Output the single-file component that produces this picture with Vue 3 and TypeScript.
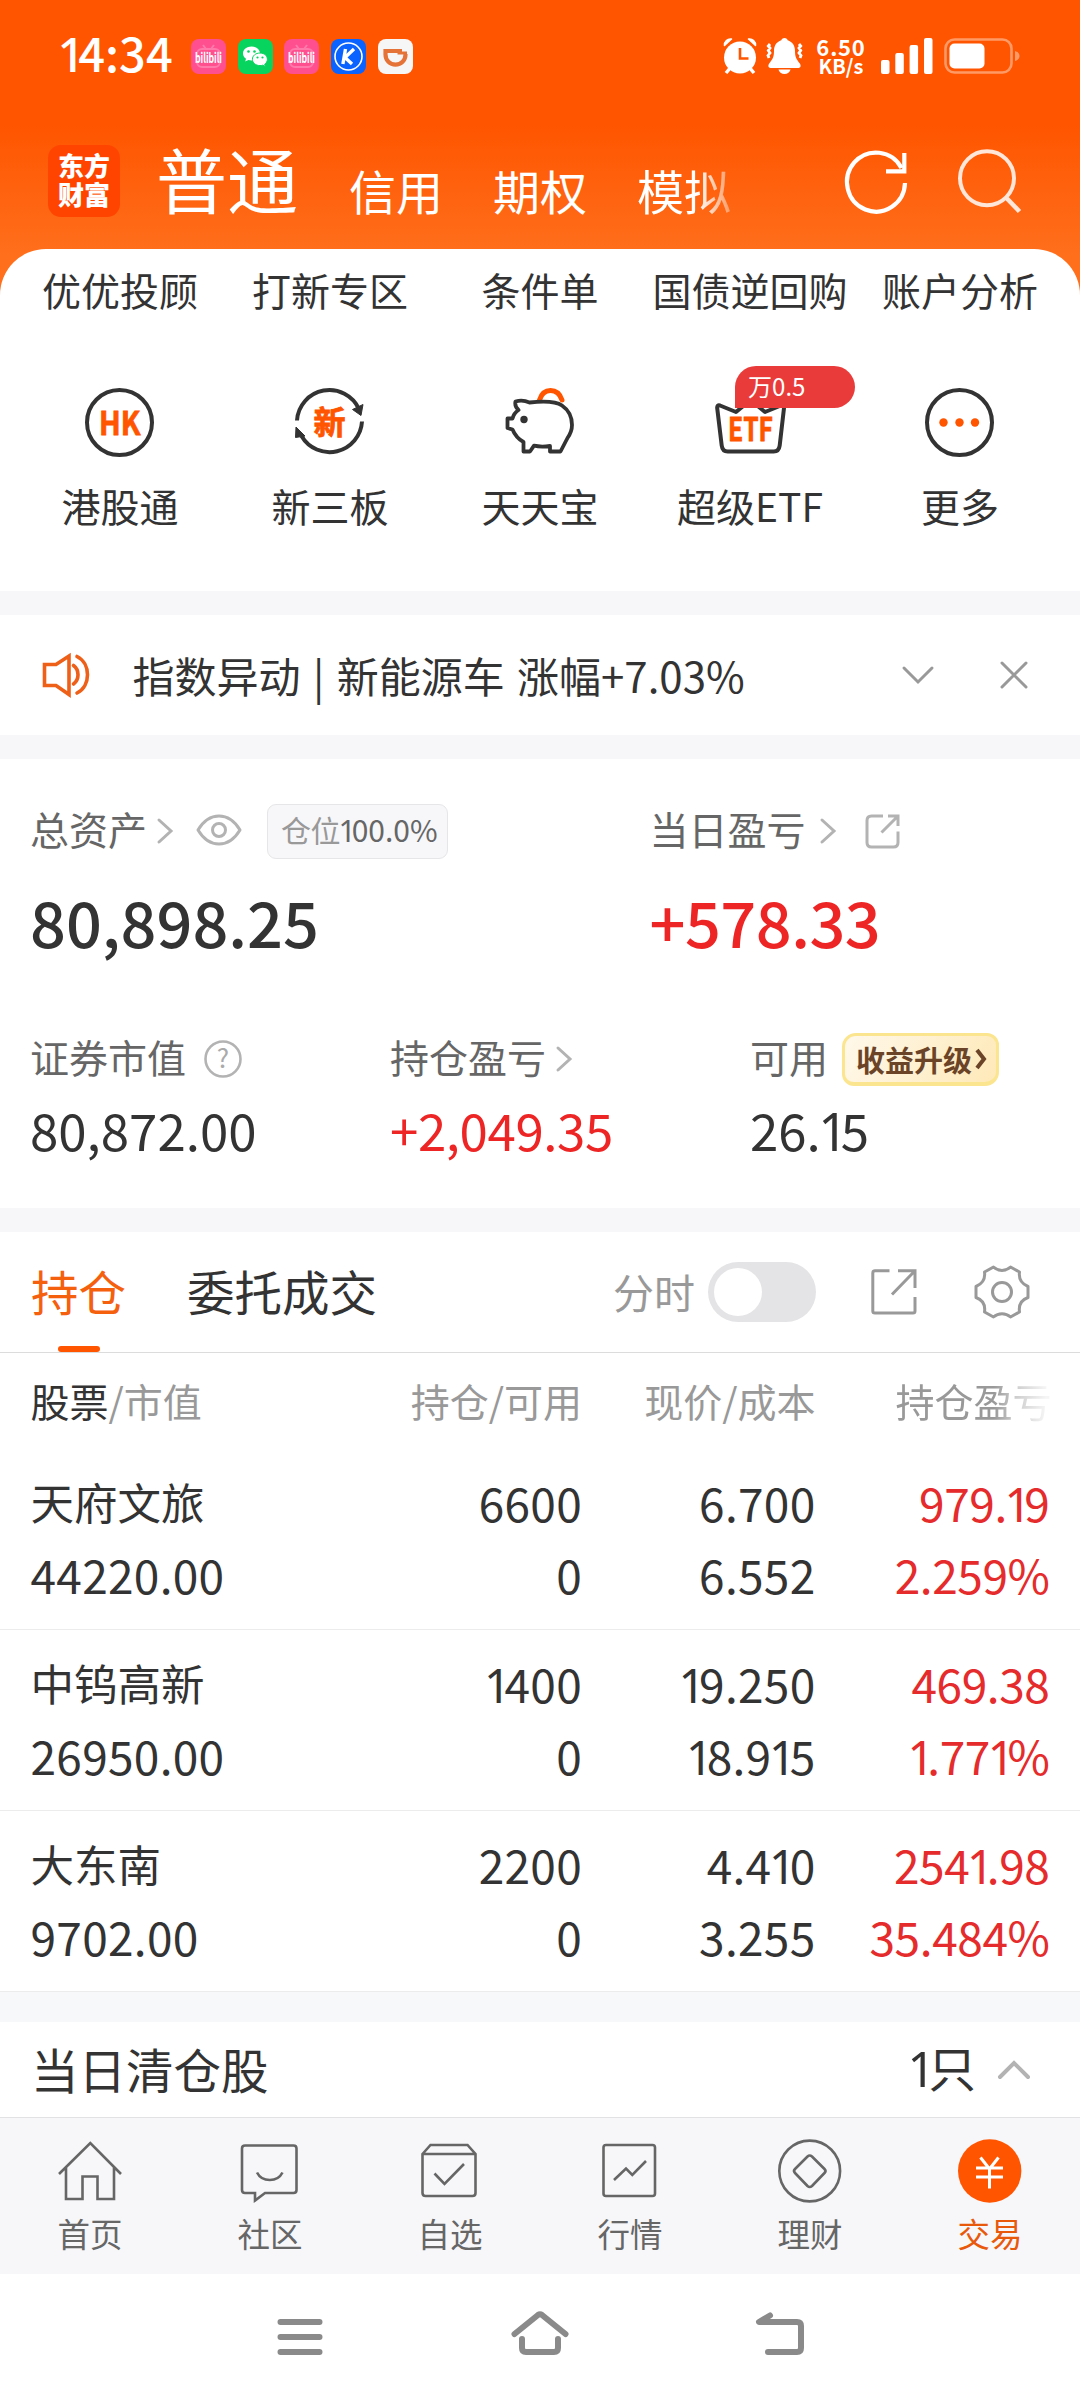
<script setup lang="ts">
import { h } from 'vue'

interface Holding {
  name: string
  value: string
  qty: string
  avail: string
  price: string
  cost: string
  profit: string
  rate: string
}

// Figures are set with a narrow, footless "1", so that digit gets its own element.
const Num = (props: { v: string }) =>
  h('span', props.v.split(/(1)/).filter(Boolean).map((s) => (s === '1' ? h('i', { class: 'one' }, s) : s)))
Num.props = ['v']

const accountTabs: string[] = ['信用', '期权', '模拟']
const shortcuts: string[] = ['优优投顾', '打新专区', '条件单', '国债逆回购', '账户分析']

const holdings: Holding[] = [
  { name: '天府文旅', value: '44220.00', qty: '6600', avail: '0', price: '6.700', cost: '6.552', profit: '979.19', rate: '2.259%' },
  { name: '中钨高新', value: '26950.00', qty: '1400', avail: '0', price: '19.250', cost: '18.915', profit: '469.38', rate: '1.771%' },
  { name: '大东南', value: '9702.00', qty: '2200', avail: '0', price: '4.410', cost: '3.255', profit: '2541.98', rate: '35.484%' },
]
</script>

<template>
  <div class="screen">
    <header class="top">
      <div class="status">
        <Num class="clock" v="14:34" />
        <div class="apps">
          <svg v-for="n in [0, 1, 2, 3, 4]" :key="n" width="35" height="35" viewBox="0 0 35 35">
            <template v-if="n === 0 || n === 2">
              <rect width="35" height="35" rx="8" fill="#ff4f8f" />
              <rect x="6" y="10" width="23" height="18" rx="5" fill="none" stroke="#ff79aa" stroke-width="2" />
              <path d="M12 6l3 4M23 6l-3 4" stroke="#ff79aa" stroke-width="2" />
              <text x="17.500" y="23.500" text-anchor="middle" font-size="14" font-weight="700" fill="#fff" textLength="27" lengthAdjust="spacingAndGlyphs">bilibili</text>
            </template>
            <template v-else-if="n === 1">
              <rect width="35" height="35" rx="8" fill="#07d35f" />
              <path d="M13.500 7.500c-5 0-8.500 3.200-8.500 7 0 2.200 1.200 4 3 5.300l-.8 2.600 3.200-1.500c1 .3 2 .5 3.100.5 5 0 8.500-3.100 8.500-6.900s-3.500-7-8.500-7z" fill="#fff" />
              <path d="M22 14c-4.400 0-7.600 2.800-7.600 6.300s3.200 6.300 7.600 6.300c1 0 1.800-.1 2.700-.4l2.700 1.300-.7-2.200c1.600-1.200 2.700-3 2.700-5 0-3.500-3-6.300-7.400-6.300z" fill="#fff" stroke="#07d35f" stroke-width="1" />
              <circle cx="10.500" cy="12.500" r="1.300" fill="#07d35f" /><circle cx="16.500" cy="12.500" r="1.300" fill="#07d35f" />
              <circle cx="19.500" cy="18.500" r="1.100" fill="#07d35f" /><circle cx="24.500" cy="18.500" r="1.100" fill="#07d35f" />
            </template>
            <template v-else-if="n === 3">
              <rect width="35" height="35" rx="8" fill="#0a63ff" />
              <circle cx="17.500" cy="17.500" r="13.500" fill="none" stroke="#fff" stroke-width="1.600" />
              <path d="M14.500 10l-2.600 15M23 10l-9 8.500 7 6.500" fill="none" stroke="#fff" stroke-width="3.400" />
            </template>
            <template v-else>
              <rect width="35" height="35" rx="8" fill="#f6f6f7" />
              <path d="M24 12H7.500v3.500c0 6 4.400 10.200 10 10.200s10-4.200 10-10.200V15" fill="none" stroke="#e57338" stroke-width="4.200" />
              <path d="M19.500 14h9.500" stroke="#e57338" stroke-width="3" />
            </template>
          </svg>
        </div>
        <div class="sys">
          <svg class="alarm" width="34" height="36" viewBox="0 0 34 36">
            <path d="M1.500 7.500a6 6 0 0 1 7-6.500zM32.500 7.500a6 6 0 0 0-7-6.500z" fill="#fff" stroke="#fff" stroke-width="1.500" stroke-linejoin="round" />
            <path d="M8 29l-5 6M26 29l5 6" stroke="#fff" stroke-width="3.500" />
            <circle cx="17" cy="19.500" r="16" fill="#fff" />
            <path d="M17 10v10.500h8.500" fill="none" stroke="#ff5500" stroke-width="2.600" />
          </svg>
          <svg class="bell" width="37" height="36" viewBox="0 0 37 36">
            <path d="M18.500 0c1.800 0 3 1 3.200 2.300 5 1.600 7.300 5.700 7.300 10.700 0 6 1.400 8.200 4.800 12.500 1.500 2.300 1 4.500-1.800 4.500H5c-2.800 0-3.300-2.200-1.800-4.500C6.600 21.200 8 19 8 13c0-5 2.300-9.100 7.300-10.700C15.500 1 16.700 0 18.500 0z" fill="#fff" />
            <path d="M12.500 31.500h12c-.5 2.700-3 4.500-6 4.500s-5.500-1.800-6-4.500z" fill="#fff" />
            <path d="M4 6l-1.700 2 1.700 2-1.700 2.500L4 15l-2 2.500 1 2.500M33 6l1.700 2-1.700 2 1.700 2.500L33 15l2 2.500-1 2.500" fill="none" stroke="#fff" stroke-width="2.800" />
          </svg>
          <div class="speed"><span class="rate-num">6.50</span><span class="rate-unit">KB/s</span></div>
          <svg class="signal" width="52" height="36" viewBox="0 0 52 36" fill="#fff">
            <rect x="0" y="22" width="8.500" height="14" rx="2" /><rect x="14.300" y="15" width="8.500" height="21" rx="2" />
            <rect x="28.600" y="7" width="8.500" height="29" rx="2" /><rect x="43" y="0" width="8.500" height="36" rx="2" />
          </svg>
          <svg width="77" height="36" viewBox="0 0 77 36">
            <rect x="1.500" y="1.500" width="66" height="33" rx="9" fill="none" stroke="#ff9a66" stroke-width="2.600" />
            <rect x="5.500" y="5.500" width="35" height="25" rx="5" fill="#fff" />
            <path d="M71 13c3 .8 4.500 2.600 4.500 5S74 22.200 71 23z" fill="#ff9a66" />
          </svg>
        </div>
      </div>
      <div class="account">
        <div class="logo"><span>东方</span><span>财富</span></div>
        <span class="acc-main">普通</span>
        <span v-for="t in accountTabs" :key="t" class="acc-tab" :class="{ fade: t === '模拟' }">{{ t }}</span>
        <svg class="refresh" width="64" height="66" viewBox="0 0 64 66" fill="none" stroke="#fff" stroke-width="4.200">
          <path d="M60 34A29 29.500 0 1 1 56.500 19" />
          <path d="M59.300 4v18.300H41" />
        </svg>
        <svg width="64" height="66" viewBox="0 0 64 66" fill="none" stroke="#ffe6d8" stroke-width="4">
          <circle cx="29" cy="29.300" r="27" /><path d="M48 48.500L61.500 62.500" stroke-width="4.600" />
        </svg>
      </div>
    </header>

    <section class="panel">
      <div class="grid5 first">
        <span v-for="s in shortcuts" :key="s" class="lbl">{{ s }}</span>
      </div>
      <div class="grid5 second">
        <div class="entry">
          <svg width="69" height="69" viewBox="0 0 69 69">
            <circle cx="34.500" cy="34.500" r="32.500" fill="none" stroke="#333" stroke-width="4" />
            <text x="14" y="46.500" font-size="32" font-weight="700" fill="#ff5500" stroke="#ff5500" stroke-width=".8" textLength="41.500" lengthAdjust="spacingAndGlyphs">HK</text>
          </svg>
          <span class="lbl">港股通</span>
        </div>
        <div class="entry">
          <svg width="69" height="69" viewBox="0 0 69 69">
            <path d="M2 32.500A32.500 32.500 0 0 1 64 21M67 33.500A32.500 32.500 0 0 1 6.500 48" fill="none" stroke="#333" stroke-width="4" />
            <path d="M68 16.500l-2 11-8.500-6zM1 39l9 9-9.500 1.500z" fill="#333" stroke="#333" stroke-linejoin="round" />
            <text x="34.500" y="46" text-anchor="middle" font-size="32" font-weight="700" fill="#ff5500" stroke="#ff5500" stroke-width=".8">新</text>
          </svg>
          <span class="lbl">新三板</span>
        </div>
        <div class="entry">
          <svg width="69" height="69" viewBox="0 0 69 69" fill="none">
            <path d="M34.500 12c2-6.500 5.500-9.500 11-9.500s9.500 3.500 11.500 9.500" stroke="#ff5500" stroke-width="5" stroke-linecap="round" />
            <path d="M10.500 13.500c5-1.500 9.500-1 14 1 14-1.500 26-1.500 32.500 3 6.500 4.500 10 11.500 10 19.500 0 5-1.800 9.200-4.500 13L55.500 63.500H45v-5.500c-6 .8-11 .8-16-.3L25 63.500H18.500V54c-5.500-3-8.500-6.500-11-12.500L2.500 40V30.500h5c1-4 3-6.500 6-8.500-2.800-2.500-3.800-5-3-8.500z" stroke="#333" stroke-width="3.800" stroke-linejoin="round" />
            <circle cx="19" cy="31.500" r="3.700" fill="#333" />
          </svg>
          <span class="lbl">天天宝</span>
        </div>
        <div class="entry">
          <span class="flag">万0.5</span>
          <svg width="71" height="69" viewBox="0 0 71 69">
            <path d="M5 17.500c-2-.7-3 .5-2.800 2.500l4.500 37.500c.5 4 2.200 6 6 6h46c3.800 0 5.500-2 6-6L69 20c.2-2-1-3.200-3-2.500l-16 6.500-14.500-12L21 24z" fill="none" stroke="#333" stroke-width="4" stroke-linejoin="round" />
            <text x="13" y="52.500" font-size="32" font-weight="700" fill="#ff5500" stroke="#ff5500" stroke-width=".8" textLength="45" lengthAdjust="spacingAndGlyphs">ETF</text>
          </svg>
          <span class="lbl">超级ETF</span>
        </div>
        <div class="entry">
          <svg width="69" height="69" viewBox="0 0 69 69">
            <circle cx="34.500" cy="34.500" r="32.500" fill="none" stroke="#333" stroke-width="4" />
            <g fill="#ff5500"><circle cx="18.500" cy="34.500" r="4.200" /><circle cx="34.500" cy="34.500" r="4.200" /><circle cx="50" cy="34.500" r="4.200" /></g>
          </svg>
          <span class="lbl">更多</span>
        </div>
      </div>
    </section>

    <div class="band"></div>

    <section class="notice">
      <svg class="speaker" width="48" height="42" viewBox="0 0 48 42" fill="none" stroke="#ee5f17" stroke-width="3.600" stroke-linecap="round">
        <path d="M2.500 10.500H14L27 2v38.500L14 31.500H2.500z" stroke-linejoin="miter" />
        <path d="M31.500 11.500c6 4.500 6 14 0 18.500M35 2.500c14 7 14 29.500 0 36.500" />
      </svg>
      <span class="notice-text">指数异动 | 新能源车 涨幅+7.03%</span>
      <svg class="down" width="32" height="18" viewBox="0 0 32 18" fill="none" stroke="#999" stroke-width="3" stroke-linecap="round"><path d="M2 2l14 14L30 2" /></svg>
      <svg width="28" height="28" viewBox="0 0 28 28" fill="none" stroke="#999" stroke-width="3" stroke-linecap="round"><path d="M2 2l24 24M26 2L2 26" /></svg>
    </section>

    <div class="band"></div>

    <section class="assets">
      <div class="major">
        <div class="total">
          <div class="cap">
            <span>总资产</span>
            <svg class="chev c1" width="16" height="26" viewBox="0 0 16 26"><path d="M2 2l12 11L2 24" /></svg>
            <svg class="eye" width="46" height="32" viewBox="0 0 46 32" fill="none" stroke="#b3b3b3" stroke-width="3">
              <path d="M2 16C8 6 15 2 23 2s15 4 21 14c-6 10-13 14-21 14S8 26 2 16z" stroke-linejoin="round" /><circle cx="23" cy="16" r="6.500" />
            </svg>
            <span class="ratio"><i>仓位</i><Num v="100.0%" /></span>
          </div>
          <div class="big">80,898.25</div>
        </div>
        <div>
          <div class="cap">
            <span>当日盈亏</span>
            <svg class="chev c2" width="16" height="26" viewBox="0 0 16 26"><path d="M2 2l12 11L2 24" /></svg>
            <svg class="share-s" width="35" height="35" viewBox="0 0 35 35" fill="none" stroke="#b3b3b3" stroke-width="3">
              <path d="M18 2H6.500Q2 2 2 6.500v22Q2 33 6.500 33h22Q33 33 33 28.500V17.500M23 2h10v10M33 2L16.500 18.500" />
            </svg>
          </div>
          <div class="big red day">+578.33</div>
        </div>
      </div>
      <div class="minor">
        <div>
          <div class="cap">
            <span>证券市值</span>
            <svg class="help" width="38" height="38" viewBox="0 0 38 38">
              <circle cx="19" cy="19" r="17.500" fill="none" stroke="#b3b3b3" stroke-width="2.600" />
              <text x="19" y="28" text-anchor="middle" font-size="26" fill="#aaa">?</text>
            </svg>
          </div>
          <div class="mid">80,872.00</div>
        </div>
        <div>
          <div class="cap">
            <span>持仓盈亏</span>
            <svg class="chev c3" width="16" height="26" viewBox="0 0 16 26"><path d="M2 2l12 11L2 24" /></svg>
          </div>
          <div class="mid red hold">+2,049.35</div>
        </div>
        <div>
          <div class="cap">
            <span>可用</span>
            <span class="upgrade">收益升级<svg width="13" height="24" viewBox="0 0 13 24" fill="none" stroke="#6b4428" stroke-width="4"><path d="M2 3l7 9-7 9" /></svg></span>
          </div>
          <div class="mid"><Num v="26.15" /></div>
        </div>
      </div>
    </section>

    <div class="band"></div>

    <section>
      <div class="tabs">
        <div class="tab active"><span>持仓</span></div>
        <div class="tab"><span>委托成交</span></div>
        <span class="minute">分时</span>
        <span class="switch"><i></i></span>
        <svg class="share-l" width="46" height="46" viewBox="0 0 46 46" fill="none" stroke="#999" stroke-width="3">
          <path d="M18.500 1.800H4Q1.800 1.800 1.800 4v38Q1.800 44 4 44h38Q44 44 44 42V28M27 1.800h17V19M44 1.800L21 25.500" />
        </svg>
        <svg width="56" height="54" viewBox="0 0 56 54" fill="none" stroke="#999" stroke-width="3">
          <path d="M19.500 2C24.500 6.500 31.500 6.500 36.500 2L45.500 7C44.500 14 47 18.500 54 21.500V32.500C47 35 44.500 40 45.500 47L36.500 52C31.500 47.500 24.500 47.500 19.500 52L10.500 47C11.500 40 9 35 2 32.500V21.500C9 18.500 11.500 14 10.500 7Z" stroke-linejoin="round" />
          <circle cx="28" cy="27" r="9.500" />
        </svg>
      </div>

      <div class="cols head">
        <span><b>股票</b>/市值</span><span>持仓/可用</span><span>现价/成本</span><span class="fade-col">持仓盈亏</span>
      </div>
      <div v-for="row in holdings" :key="row.name" class="holding">
        <div class="cols">
          <span class="stock">{{ row.name }}</span><Num :v="row.qty" /><Num :v="row.price" /><Num class="gain" :v="row.profit" />
        </div>
        <div class="cols">
          <Num :v="row.value" /><Num :v="row.avail" /><Num :v="row.cost" /><Num class="gain" :v="row.rate" />
        </div>
      </div>
    </section>

    <div class="band tall"></div>

    <section class="cleared">
      <span>当日清仓股</span>
      <Num class="count" v="1只" />
      <svg width="34" height="20" viewBox="0 0 34 20" fill="none" stroke="#b3b3b3" stroke-width="4" stroke-linecap="round"><path d="M3 17L17 3l14 14" /></svg>
    </section>

    <nav class="tabbar">
      <div class="nav-item">
        <svg class="line" viewBox="0 0 64 64"><path d="M1 35L32.300 4 63 35M8 28.500V60H24.500V37.500H39.500V60H56V28.500" /></svg>
        <span>首页</span>
      </div>
      <div class="nav-item">
        <svg class="line" viewBox="0 0 64 64"><path d="M7 6.500H55.500Q58.500 6.500 58.500 9.500V51Q58.500 54 55.500 54H27L17 61.500V54H7Q4 54 4 51V9.500Q4 6.500 7 6.500zM19 33.500C24 43.500 39.500 43.500 44.500 33.500" /></svg>
        <span>社区</span>
      </div>
      <div class="nav-item">
        <svg class="line" viewBox="0 0 64 64"><path d="M4.500 15L12.500 6H49.500L57.500 15V54Q57.500 57 54.500 57H7.500Q4.500 57 4.500 54zH57.500M16.500 34.500L26.500 45 46 25" /></svg>
        <span>自选</span>
      </div>
      <div class="nav-item">
        <svg class="line" viewBox="0 0 64 64"><rect x="5.500" y="6" width="51.500" height="51" rx="2.500" /><path d="M16 41L28 29.500 34.300 36 48 22" /></svg>
        <span>行情</span>
      </div>
      <div class="nav-item">
        <svg class="line" viewBox="0 0 64 64"><circle cx="31.700" cy="32" r="30.400" /><path d="M29.500 17.500Q31.700 15.500 34 17.500L46.500 30Q48.500 32 46.500 34L34 47Q31.700 49 29.500 47L17 34Q15 32 17 30z" /></svg>
        <span>理财</span>
      </div>
      <div class="nav-item on">
        <svg viewBox="0 0 64 64"><circle cx="31.700" cy="32" r="31.700" fill="#ff5500" /><path d="M22.500 18.500L31.500 30 40.500 18.500M18 29H45M18 38H45M31.500 29V49.500" fill="none" stroke="#fff" stroke-width="3" /></svg>
        <span>交易</span>
      </div>
    </nav>

    <footer class="sysnav">
      <svg width="60" height="50" viewBox="0 0 60 50"><path d="M10.500 11h39M10.500 26h39M10.500 41h39" /></svg>
      <svg width="60" height="50" viewBox="0 0 60 50"><path d="M4.500 23L28 4Q30 2.500 32 4L55.500 23M12 28v9q0 4 4 4h28q4 0 4-4v-9" /></svg>
      <svg width="60" height="50" viewBox="0 0 60 50"><path d="M20 4.500L9 11h38q4 0 4 4v22q0 4-4 4H18" /></svg>
    </footer>
  </div>
</template>

<style>
body {
  background: #fff;
}
.one {
  margin: 0 -0.14em 0 -0.05em;
  font-family: "Noto Sans", sans-serif;
  font-size: 1.02em;
  font-style: normal;
  line-height: 1;
}
</style>

<style scoped>
.screen {
  width: 1080px;
  height: 2400px;
  overflow: hidden;
  background: #fff;
  color: #333;
  font-family: "Noto Sans CJK SC", "Noto Sans", sans-serif;
  font-size: 39px;
  line-height: 40px;
  white-space: nowrap;
}
svg {
  display: block;
  flex: none;
  overflow: visible;
}
.top {
  height: 300px;
  background: linear-gradient(#ff5500 0, #ff5500 125px, #ff6f1c 255px);
  color: #fff;
}
.status {
  display: flex;
  align-items: center;
  height: 112px;
  box-sizing: border-box;
  padding: 1px 59px 0 60px;
}
.clock {
  width: 131px;
  font-size: 47px;
  font-weight: 500;
  margin-top: -6px;
}
.apps {
  display: flex;
  gap: 11.700px;
}
.sys {
  display: flex;
  margin-left: auto;
}
.alarm {
  margin-right: 9px;
}
.speed {
  display: flex;
  flex-direction: column;
  align-items: center;
  width: 46px;
  margin: 0 17px 0 15px;
  font-weight: 700;
}
.rate-num {
  font-size: 22px;
  line-height: 16px;
  height: 19px;
  letter-spacing: 0.8px;
}
.rate-unit {
  font-size: 20px;
  line-height: 18px;
}
.signal {
  margin-right: 11px;
}
.account {
  display: flex;
  height: 137px;
  padding: 0 58px 0 48px;
}
.logo {
  display: flex;
  flex-direction: column;
  align-items: center;
  width: 72px;
  height: 64px;
  margin-top: 33px;
  padding-top: 8px;
  border-radius: 13px;
  background: #ff4400;
  font-size: 26px;
  font-weight: 900;
  line-height: 29px;
}
.logo span {
  height: 29px;
  line-height: 24px;
}
.acc-main {
  width: 142px;
  margin: 29px 3px 0 36px;
  font-size: 71px;
  line-height: 72px;
}
.acc-tab {
  width: 96px;
  margin: 54px 0 0 48px;
  font-size: 47px;
  line-height: 48px;
}
.fade {
  mask-image: linear-gradient(to right, #000 62%, rgba(0, 0, 0, 0.4) 95%);
}
.refresh {
  margin-left: auto;
  margin-right: 49px;
}
.refresh,
.refresh + svg {
  margin-top: 37px;
}
.panel {
  position: relative;
  height: 322px;
  margin-top: -51px;
  padding-top: 20px;
  border-radius: 46px 46px 0 0;
  background: #fff;
}
.grid5 {
  display: grid;
  grid-template-columns: repeat(5, 210px);
  justify-content: center;
  justify-items: center;
}
.lbl {
  display: block;
  font-size: 39px;
  line-height: 40px;
}
.second {
  margin-top: 79px;
}
.entry {
  position: relative;
  display: flex;
  flex-direction: column;
  align-items: center;
}
.entry .lbl {
  margin-top: 28px;
}
.flag {
  position: absolute;
  left: 58px;
  top: -22px;
  width: 107px;
  height: 42px;
  padding-left: 13px;
  border-radius: 21px 21px 21px 0;
  background: #ea3b3b;
  color: #fff;
  font-size: 24px;
  line-height: 40px;
}
.band {
  height: 24px;
  background: #f7f7fa;
}
.band.tall {
  height: 30px;
  background: #f7f8fa;
}
.notice {
  display: flex;
  align-items: center;
  height: 120px;
  padding: 0 52px 0 42px;
}
.notice-text {
  margin: 0 auto 0 42.500px;
  font-size: 42px;
  word-spacing: 3px;
}
.down {
  margin-right: 66px;
}
.assets {
  height: 404px;
  padding: 45px 0 0 30px;
}
.major {
  display: grid;
  grid-template-columns: 619.500px 1fr;
}
.minor {
  display: grid;
  grid-template-columns: repeat(3, 360px);
  margin-top: 79px;
}
.cap {
  display: flex;
  align-items: center;
  height: 54px;
  color: #666;
}
.cap > span:first-child {
  margin-top: -6px;
}
.chev {
  fill: none;
  stroke: #b3b3b3;
  stroke-width: 3;
  stroke-linecap: round;
}
.c1 {
  margin-left: 10px;
}
.c2 {
  margin-left: 14px;
}
.c3 {
  margin-left: 10px;
}
.eye {
  margin-left: 23px;
  margin-top: -2px;
}
.ratio {
  box-sizing: border-box;
  width: 181px;
  height: 55px;
  margin-left: 25px;
  padding-left: 13px;
  border: 1px solid #e6e6e8;
  border-radius: 9px;
  background: #f7f7fa;
  font-size: 30px;
  line-height: 49px;
}
.ratio > i {
  font-style: normal;
  color: #999;
  letter-spacing: -0.5px;
}
.share-s {
  margin-left: 29px;
}
.big {
  margin-top: 31px;
  font-size: 63px;
  font-weight: 500;
  line-height: 64px;
}
.day {
  letter-spacing: -0.5px;
}
.mid {
  margin-top: 17px;
  font-size: 51px;
  line-height: 52px;
}
.hold {
  letter-spacing: -0.4px;
}
.red {
  color: #ee2525;
}
.help {
  margin-left: 18px;
}
.upgrade {
  display: flex;
  align-items: center;
  box-sizing: border-box;
  width: 157px;
  height: 53px;
  margin-left: 14px;
  padding-left: 11px;
  gap: 3px;
  border: 3px solid #fbe58f;
  border-bottom-width: 4px;
  border-radius: 14px 12px 14px 12px;
  background: linear-gradient(120deg, #fff8ea, #fee9b8);
  color: #6b4428;
  font-size: 29px;
  font-weight: 700;
  line-height: 42px;
}
.tabs {
  display: flex;
  align-items: center;
  height: 120px;
  padding: 0 50px 0 31px;
  border-bottom: 1px solid #dcdcdc;
}
.tab {
  display: flex;
  flex-direction: column;
  align-items: center;
  height: 120px;
  margin-right: 61px;
  font-size: 47.500px;
}
.tab span {
  margin-top: 39px;
  height: 75px;
}
.active {
  color: #f5600f;
}
.active::after {
  content: "";
  width: 42px;
  height: 6px;
  border-radius: 3px;
  background: #ff5500;
}
.minute {
  margin: -2px 13px 0 auto;
  color: #999;
  font-size: 41px;
}
.switch {
  width: 96px;
  height: 48px;
  padding: 6px;
  border-radius: 30px;
  background: #e4e4e6;
}
.switch i {
  display: block;
  width: 48px;
  height: 48px;
  border-radius: 24px;
  background: #fff;
}
.share-l {
  margin: 0 57px 0 55px;
}
.cols {
  display: grid;
  grid-template-columns: 321.500px 230px 233.500px 234px;
  padding-left: 30.500px;
}
.cols span + span {
  text-align: right;
}
.head {
  height: 96px;
  line-height: 94px;
  color: #999;
  font-size: 39px;
}
.head b {
  font-weight: 400;
  color: #333;
}
.head .fade-col {
  text-align: left;
  padding-left: 80px;
  mask-image: linear-gradient(to right, #000 76%, rgba(0, 0, 0, 0.5) 85%, rgba(0, 0, 0, 0.1) 98%);
}
.holding {
  padding: 17px 0 19px;
  border-bottom: 1px solid #ececec;
  font-size: 46px;
  letter-spacing: 0.3px;
}
.holding .cols {
  height: 72px;
  line-height: 72px;
}
.stock {
  font-size: 43.500px;
  letter-spacing: 0;
}
.gain {
  color: #e52b2b;
  letter-spacing: -0.4px;
}
.cleared {
  display: flex;
  align-items: center;
  height: 95px;
  padding: 0 49px 0 31px;
  font-size: 47.500px;
  border-bottom: 1px solid #e2e2e4;
}
.cleared > span {
  margin-top: -2px;
}
.cleared .count {
  margin: -2px 21px 0 auto;
}
.tabbar {
  display: grid;
  grid-template-columns: repeat(6, 180px);
  height: 156px;
  background: #f7f7fa;
}
.nav-item {
  display: flex;
  flex-direction: column;
  align-items: center;
  padding-top: 21px;
  color: #666;
  font-size: 32.500px;
  line-height: 40px;
}
.nav-item svg {
  width: 64px;
  height: 64px;
  margin-bottom: 10px;
}
.line {
  fill: none;
  stroke: #666;
  stroke-width: 2.600;
}
.on {
  color: #e8590c;
}
.sysnav {
  display: flex;
  justify-content: center;
  gap: 180px;
  padding: 37px 0 0;
}
.sysnav svg {
  fill: none;
  stroke: #8a8a8a;
  stroke-width: 6;
  stroke-linecap: round;
  stroke-linejoin: round;
}
</style>
